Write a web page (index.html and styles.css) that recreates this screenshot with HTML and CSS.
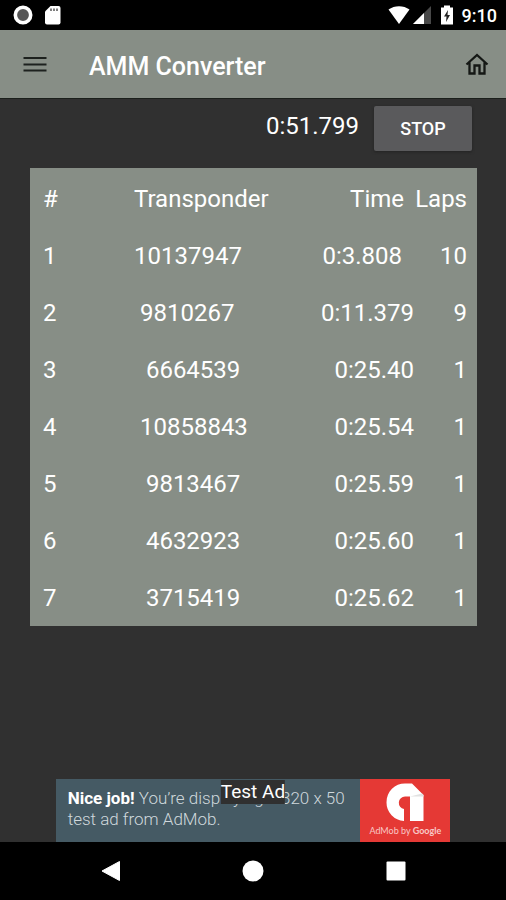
FILE: index.html
```
<!DOCTYPE html>
<html lang="en">
<head>
  <meta charset="utf-8">
  <meta name="viewport" content="width=device-width, initial-scale=1">
  <title>AMM Converter</title>
  <link rel="stylesheet" href="styles.css">
</head>
<body>
  <div class="status-bar">
    <svg width="20" height="20" viewBox="0 0 20 20">
      <circle cx="10" cy="10" r="7.7" fill="#555" stroke="#fff" stroke-width="3.6"/>
    </svg>
    <svg width="17" height="20" viewBox="0 0 17 20">
      <path d="M6.500 1H14.500Q16.500 1 16.500 3V17.500Q16.500 19.500 14.500 19.500H3Q1 19.500 1 17.500V6.500Z" fill="#fff"/>
      <path d="M7 3.500V6M10 3.500V6M13 3.500V6" stroke="#555" stroke-width="1.500"/>
    </svg>
    <div class="status-right">
      <svg width="22" height="20" viewBox="0 0 22 20">
        <path d="M.5 4.500C6.500 0 15.500 0 21.500 4.500L11 19Z" fill="#fff"/>
      </svg>
      <svg class="signal" width="20" height="20" viewBox="0 0 20 20">
        <path d="M19 1V19H1Z" fill="#484848"/>
        <path d="M12 8V19H1Z" fill="#fff"/>
      </svg>
      <svg class="battery" width="14" height="20" viewBox="0 0 14 20">
        <path d="M4 .5H10V2.500H13V19.500H1V2.500H4Z" fill="#fff"/>
        <path d="M8 5L4 11.500H6.500L6 17L10 10H7.500Z" fill="#222"/>
      </svg>
      <span>9:10</span>
    </div>
  </div>

  <header class="app-bar">
    <button class="icon-button" aria-label="Menu">
      <svg width="24" height="18" viewBox="0 0 24 18">
        <path d="M.5 3H23.500M.5 9.500H23.500M.5 15.500H23.500" stroke="#1d211e" stroke-width="2.200"/>
      </svg>
    </button>
    <h1>AMM Converter</h1>
    <button class="icon-button" aria-label="Home">
      <svg width="24" height="24" viewBox="0 0 24 24" fill="none" stroke="#151815" stroke-width="2.300">
        <path d="M1.500 12.500L12 3L22.500 12.500M4.500 10.500V21.500H9.500V13.500H14.500V21.500H19.500V10.500"/>
      </svg>
    </button>
  </header>

  <main>
    <div class="timer-row">
      <span class="timer">0:51.799</span>
      <button class="stop">STOP</button>
    </div>

    <div class="results">
      <table>
        <thead>
          <tr><th class="num">#</th><th class="transponder">Transponder</th><th class="time">Time</th><th class="laps">Laps</th></tr>
        </thead>
        <tbody>
          <!-- ids and times are padded with spaces -->
          <tr><td>1</td><td>10137947</td><td class="time">0:3.808&nbsp;&nbsp;</td><td class="laps">10</td></tr>
          <tr><td>2</td><td>&nbsp;9810267</td><td class="time">0:11.379</td><td class="laps">9</td></tr>
          <tr><td>3</td><td>&nbsp;&nbsp;6664539</td><td class="time">0:25.40</td><td class="laps">1</td></tr>
          <tr><td>4</td><td>&nbsp;10858843</td><td class="time">0:25.54</td><td class="laps">1</td></tr>
          <tr><td>5</td><td>&nbsp;&nbsp;9813467</td><td class="time">0:25.59</td><td class="laps">1</td></tr>
          <tr><td>6</td><td>&nbsp;&nbsp;4632923</td><td class="time">0:25.60</td><td class="laps">1</td></tr>
          <tr><td>7</td><td>&nbsp;&nbsp;3715419</td><td class="time">0:25.62</td><td class="laps">1</td></tr>
        </tbody>
      </table>
    </div>

    <div class="ad">
      <p class="ad-text"><strong>Nice job!</strong> You’re displaying a 320 x 50 test ad from AdMob.</p>
      <div class="ad-logo">
        <svg width="38" height="40" viewBox="0 0 38 40">
          <path d="M18 38A18.500 18.500 0 0 1 .5 19.500C.5 8 9 .5 19 .5H26L37.500 12V38H24V13.500H19A6.300 6.300 0 0 0 18 26Z" fill="#fff"/>
          <path d="M24 13.500H37.500V12L36 10.500Z" fill="#e2e2e2"/>
        </svg>
        <span>AdMob by <b>Google</b></span>
      </div>
      <span class="ad-label">Test Ad</span>
    </div>
  </main>

  <nav class="nav-bar">
    <button aria-label="Back">
      <svg width="22" height="22" viewBox="0 0 22 22"><path d="M20.500 1.500V20.500L3 11Z" fill="#fff" stroke="#fff" stroke-linejoin="round"/></svg>
    </button>
    <button aria-label="Home">
      <svg width="22" height="22" viewBox="0 0 22 22"><circle cx="11" cy="11" r="10.500" fill="#fff"/></svg>
    </button>
    <button aria-label="Recent apps">
      <svg width="22" height="22" viewBox="0 0 22 22"><rect x="1.500" y="1.500" width="19" height="19" rx="1" fill="#fff"/></svg>
    </button>
  </nav>
</body>
</html>
```

FILE: styles.css
```
* {
  box-sizing: border-box;
}

body {
  margin: 0;
  min-height: 100vh;
  display: flex;
  flex-direction: column;
  background-color: #303030;
  color: #fff;
  font-family: Roboto, sans-serif;
}

svg {
  display: block;
}

button {
  border: none;
  padding: 0;
  background: none;
  color: inherit;
  font-family: inherit;
}

.status-bar {
  display: flex;
  align-items: center;
  gap: 11px;
  height: 30px;
  padding: 0 9px 0 13px;
  background-color: #000;
}

.status-right {
  display: flex;
  align-items: center;
  margin-left: auto;
  font-size: 18px;
  font-weight: 500;
}

.signal {
  margin-left: 2px;
}

.battery {
  margin: 0 8px;
}

.app-bar {
  display: flex;
  align-items: center;
  height: 69px;
  padding: 0 17px 0 23px;
  background-color: #878e86;
  border-bottom: 1px solid #1c201c;
}

.app-bar h1 {
  flex: 1;
  margin: 0 0 0 42px;
  padding-top: 4px;
  font-size: 25px;
  font-weight: 500;
}

main {
  flex: 1;
  display: flex;
  flex-direction: column;
}

.timer-row {
  display: flex;
  justify-content: flex-end;
  gap: 15px;
  padding: 7px 34px 0 0;
}

.timer {
  font-size: 24px;
  line-height: 40px;
}

.stop {
  width: 98px;
  height: 45px;
  border-radius: 2px;
  background-color: #5a5a5c;
  box-shadow: 0 1px 3px #222;
  font-size: 18px;
  font-weight: 500;
}

.results {
  margin: 17px 29px 0 30px;
  padding-top: 2px;
  background-color: #878e86;
}

table {
  width: 100%;
  table-layout: fixed;
  border-collapse: collapse;
  font-size: 24px;
}

th,
td {
  height: 57px;
  padding: 0;
  font-weight: 400;
  text-align: left;
  white-space: nowrap;
}

th:first-child,
td:first-child {
  padding-left: 13px;
}

.num {
  width: 104px;
}

.laps {
  width: 63px;
  padding-right: 10px;
  text-align: right;
}

.time {
  text-align: right;
}

th.time {
  padding-right: 10px;
}

.ad {
  position: relative;
  display: flex;
  width: 78%;
  margin: auto auto 0;
  background-color: #455a64;
}

.ad-text {
  flex: 1;
  margin: 0;
  padding: 9px 0 0 12px;
  color: #cfd8dc;
  font-size: 17px;
  font-weight: 300;
  line-height: 21px;
}

.ad-text strong {
  color: #fff;
  font-weight: 700;
}

.ad-logo {
  display: flex;
  flex-direction: column;
  align-items: center;
  width: 90px;
  height: 63px;
  padding-top: 4px;
  background-color: #e53935;
  color: #f8c8c6;
  font-size: 9px;
  line-height: 16px;
  white-space: nowrap;
}

.ad-logo span {
  font-family: Lato, sans-serif;
}

.ad-logo b {
  font-weight: 700;
}

/* sits over the banner text */
.ad-label {
  position: absolute;
  top: 1px;
  left: 50%;
  transform: translateX(-50%);
  background-color: #303030;
  font-size: 19px;
  line-height: 24px;
  white-space: nowrap;
}

.nav-bar {
  display: flex;
  justify-content: center;
  gap: 121px;
  height: 58px;
  background-color: #000;
}
```
